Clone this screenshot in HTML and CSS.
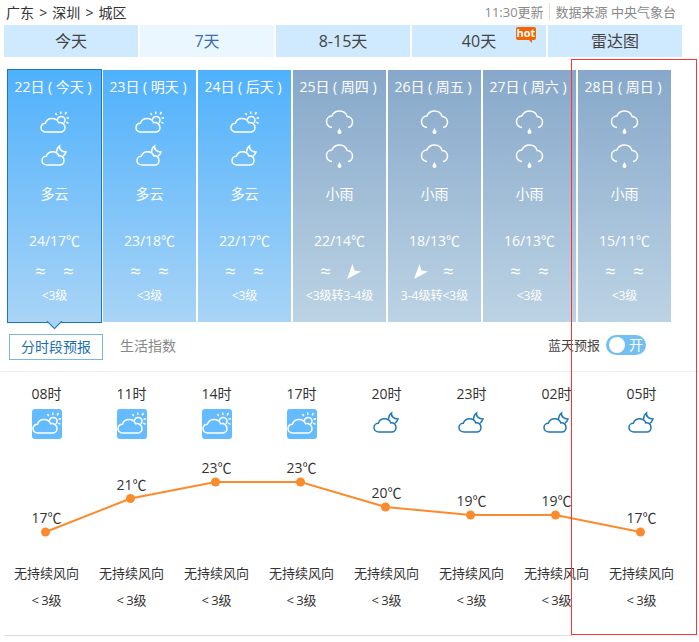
FILE: index.html
```html
<!DOCTYPE html>
<html lang="zh-CN">
<head>
    <meta charset="UTF-8">
    <title>深圳城区天气预报</title>
    <link rel="stylesheet" href="styles.css">
</head>
<body>

    <svg class="defs" width="0" height="0">
        <symbol id="i-cloud-sun" viewBox="0 0 30 24">
            <path d="M6 22C3 22 1 20 1 17.5 1 15 3 13.2 5.4 13.2 6.4 10.3 9 8.5 12 8.5c3 0 5.600 1.600 6.600 4.200C22 12 25 14.200 25 17.500 25 20 23 22 20.500 22Z"/>
            <path d="M17.300 9.800C17.700 7.800 19.300 6.400 21.200 6.400c2.100 0 3.800 1.700 3.800 3.800 0 1.100-.5 2.100-1.200 2.800"/>
            <path d="M20.500 1.500l.5 2.400M26.500 2l-1.400 2.300M29 7.700l-2.400.5M28.500 13.300l-2.200-1.200M15.500 3.200l1.300 2"/>
        </symbol>
        <symbol id="i-cloud-moon" viewBox="0 0 30 24">
            <path d="M7 21C4.300 21 2 19.200 2 16.500 2 14 4 12.300 6.300 12.300 7.300 9.500 9.800 7.800 12.500 7.800c2.900 0 5.400 1.600 6.300 4.100C21.800 11.500 24 13.500 24 16.500 24 19 22.200 21 19.800 21Z"/>
            <path d="M16.500 8.500C16.500 6 17.500 3.500 19.500 2 19 5 21.500 8 26 8 25.500 9.500 24.500 11 23 12.300"/>
        </symbol>
        <symbol id="i-rain" viewBox="0 0 30 24">
            <path d="M7 17.500C3.500 17 1.500 14.500 1.500 11.500 1.500 8.500 3.800 6.200 6.800 6 8.300 2.800 11.200 1 14.500 1c3.600 0 6.700 2.300 7.700 5.500 3 .2 5.300 2.500 5.300 5.500 0 3-2 5-4.500 5.500"/>
            <path class="fill" d="M14.500 18c-.8 1.800-2 2.800-2 4a2 2 0 0 0 4 0c0-1.200-1.200-2.200-2-4Z"/>
        </symbol>
    </svg>

    <div class="head">
        <div class="crumb">广东 &gt; 深圳 &gt; 城区</div>
        <div class="source"><span class="updated">11:30更新</span><span>数据来源 中央气象台</span></div>
    </div>

    <ul class="tabs">
        <li>今天</li>
        <li class="on">7天</li>
        <li>8-15天</li>
        <li class="has-hot">40天<span class="hot">hot</span></li>
        <li>雷达图</li>
    </ul>

    <div class="days">
        <div class="day sel">
            <div class="date">22日 ( 今天 )</div>
            <svg class="ico first"><use href="#i-cloud-sun"/></svg>
            <svg class="ico"><use href="#i-cloud-moon"/></svg>
            <div class="wea">多云</div>
            <div class="tem">24/17℃</div>
            <div class="wind"><span>≈</span><span>≈</span></div>
            <div class="lv">&lt;3级</div>
        </div>
        <div class="day">
            <div class="date">23日 ( 明天 )</div>
            <svg class="ico first"><use href="#i-cloud-sun"/></svg>
            <svg class="ico"><use href="#i-cloud-moon"/></svg>
            <div class="wea">多云</div>
            <div class="tem">23/18℃</div>
            <div class="wind"><span>≈</span><span>≈</span></div>
            <div class="lv">&lt;3级</div>
        </div>
        <div class="day">
            <div class="date">24日 ( 后天 )</div>
            <svg class="ico first"><use href="#i-cloud-sun"/></svg>
            <svg class="ico"><use href="#i-cloud-moon"/></svg>
            <div class="wea">多云</div>
            <div class="tem">22/17℃</div>
            <div class="wind"><span>≈</span><span>≈</span></div>
            <div class="lv">&lt;3级</div>
        </div>
        <div class="day rainy">
            <div class="date">25日 ( 周四 )</div>
            <svg class="ico first"><use href="#i-rain"/></svg>
            <svg class="ico"><use href="#i-rain"/></svg>
            <div class="wea">小雨</div>
            <div class="tem">22/14℃</div>
            <div class="wind"><span>≈</span><span><svg class="arrow" viewBox="0 0 14 15"><polygon points="0,15 5.500,0 7.500,6.500 14,7.500"/></svg></span></div>
            <div class="lv">&lt;3级转3-4级</div>
        </div>
        <div class="day rainy">
            <div class="date">26日 ( 周五 )</div>
            <svg class="ico first"><use href="#i-rain"/></svg>
            <svg class="ico"><use href="#i-rain"/></svg>
            <div class="wea">小雨</div>
            <div class="tem">18/13℃</div>
            <div class="wind"><span><svg class="arrow" viewBox="0 0 14 15"><polygon points="0,15 5.500,0 7.500,6.500 14,7.500"/></svg></span><span>≈</span></div>
            <div class="lv">3-4级转&lt;3级</div>
        </div>
        <div class="day rainy">
            <div class="date">27日 ( 周六 )</div>
            <svg class="ico first"><use href="#i-rain"/></svg>
            <svg class="ico"><use href="#i-rain"/></svg>
            <div class="wea">小雨</div>
            <div class="tem">16/13℃</div>
            <div class="wind"><span>≈</span><span>≈</span></div>
            <div class="lv">&lt;3级</div>
        </div>
        <div class="day rainy">
            <div class="date">28日 ( 周日 )</div>
            <svg class="ico first"><use href="#i-rain"/></svg>
            <svg class="ico"><use href="#i-rain"/></svg>
            <div class="wea">小雨</div>
            <div class="tem">15/11℃</div>
            <div class="wind"><span>≈</span><span>≈</span></div>
            <div class="lv">&lt;3级</div>
        </div>
    </div>

    <div class="subbar">
        <div class="subtab on">分时段预报</div>
        <div class="subtab">生活指数</div>
        <div class="sky">
            <span>蓝天预报</span>
            <div class="toggle"><i class="knob"></i><span>开</span></div>
        </div>
    </div>

    <div class="hours">
        <div class="hour"><p>08时</p><div class="hico day-ico"><svg><use href="#i-cloud-sun"/></svg></div></div>
        <div class="hour"><p>11时</p><div class="hico day-ico"><svg><use href="#i-cloud-sun"/></svg></div></div>
        <div class="hour"><p>14时</p><div class="hico day-ico"><svg><use href="#i-cloud-sun"/></svg></div></div>
        <div class="hour"><p>17时</p><div class="hico day-ico"><svg><use href="#i-cloud-sun"/></svg></div></div>
        <div class="hour"><p>20时</p><div class="hico"><svg><use href="#i-cloud-moon"/></svg></div></div>
        <div class="hour"><p>23时</p><div class="hico"><svg><use href="#i-cloud-moon"/></svg></div></div>
        <div class="hour"><p>02时</p><div class="hico"><svg><use href="#i-cloud-moon"/></svg></div></div>
        <div class="hour"><p>05时</p><div class="hico"><svg><use href="#i-cloud-moon"/></svg></div></div>
    </div>

    <svg class="chart" width="699" height="105">
        <polyline points="45.500,87 130.500,53.500 215.500,37 300.500,37 385.500,62 470.500,70 555.500,70 640.500,87"/>
        <circle cx="45.500" cy="87" r="4.500"/>
        <circle cx="130.500" cy="53.500" r="4.500"/>
        <circle cx="215.500" cy="37" r="4.500"/>
        <circle cx="300.500" cy="37" r="4.500"/>
        <circle cx="385.500" cy="62" r="4.500"/>
        <circle cx="470.500" cy="70" r="4.500"/>
        <circle cx="555.500" cy="70" r="4.500"/>
        <circle cx="640.500" cy="87" r="4.500"/>
        <text x="46.500" y="78">17℃</text>
        <text x="131.500" y="44.500">21℃</text>
        <text x="216.500" y="28">23℃</text>
        <text x="301.500" y="28">23℃</text>
        <text x="386.500" y="53">20℃</text>
        <text x="471.500" y="61">19℃</text>
        <text x="556.500" y="61">19℃</text>
        <text x="641.500" y="78">17℃</text>
    </svg>

    <div class="winds">
        <div><p>无持续风向</p><p class="wl">&lt; 3级</p></div>
        <div><p>无持续风向</p><p class="wl">&lt; 3级</p></div>
        <div><p>无持续风向</p><p class="wl">&lt; 3级</p></div>
        <div><p>无持续风向</p><p class="wl">&lt; 3级</p></div>
        <div><p>无持续风向</p><p class="wl">&lt; 3级</p></div>
        <div><p>无持续风向</p><p class="wl">&lt; 3级</p></div>
        <div><p>无持续风向</p><p class="wl">&lt; 3级</p></div>
        <div><p>无持续风向</p><p class="wl">&lt; 3级</p></div>
    </div>

    <div class="bottom-line"></div>

    <div class="red-frame"></div>

</body>
</html>
```

FILE: styles.css
```css
* { box-sizing: border-box; }
body { margin: 0; width: 699px; height: 642px; position: relative; overflow: hidden; background: #fff; color: #333; font-family: "Open Sans", "Noto Sans CJK SC", sans-serif; font-size: 14px; }
p { margin: 0; }
ul { margin: 0; padding: 0; list-style: none; }
.defs { position: absolute; }

.head { height: 25px; padding: 3px 23px 0 6px; display: flex; justify-content: space-between; line-height: 20px; }
.crumb { color: #333; font-size: 14px; word-spacing: 1.500px; }
.source { color: #8a8a8a; font-size: 13px; line-height: 18px; }
.updated { padding-right: 5px; margin-right: 6px; border-right: 1px solid #eadfd3; }

.tabs { display: flex; gap: 2px; padding-left: 4px; }
.tabs li { width: 134px; height: 32px; line-height: 32px; text-align: center; font-size: 16px; color: #444; background: #cfe9fe; }
.tabs li.on { background: #ebf7ff; color: #3d6cb0; }
.has-hot { position: relative; }
.hot { position: absolute; left: 104px; top: 2px; width: 20px; height: 13px; line-height: 12px; font-size: 11px; font-weight: bold; color: #fff; background: #f26500; border-radius: 2px; }
.hot::after { content: ""; position: absolute; left: 12px; top: 12px; border: 2px solid transparent; border-top-color: #f26500; border-right-color: #f26500; }

.days { display: flex; gap: 2px; margin-top: 13px; padding-left: 7px; height: 252px; }
.day { width: 93px; height: 252px; text-align: center; color: #fff; background: linear-gradient(#4fb1fc, #a9d4f6); padding-top: 7px; flex: none; }
.day.rainy { background: linear-gradient(#87a8ca, #bcd3e4); }
.day.sel { width: 95px; height: 254px; margin: -1px -1px 0 0; padding-top: 7px; border: 1px solid #1e77b0; position: relative; }
.day.sel::after { content: ""; position: absolute; left: 41px; bottom: -5px; width: 10px; height: 10px; transform: rotate(45deg); background: #a9d4f6; border: solid #1e77b0; border-width: 0 1px 1px 0; }
.date { line-height: 20px; font-size: 14px; white-space: nowrap; padding-right: 3px; }
.ico { display: block; width: 30px; height: 24px; margin: 10px auto 0; fill: none; stroke: #fff; stroke-width: 1.500; }
.ico.first { margin-top: 13px; }
.fill { fill: #fff; stroke: none; }
.wea { line-height: 20px; margin-top: 16px; }
.tem { line-height: 20px; margin-top: 27px; }
.wind { display: flex; justify-content: center; height: 20px; line-height: 20px; margin-top: 10px; font-size: 19px; }
.wind span { width: 28px; display: flex; align-items: center; justify-content: center; }
.arrow { width: 14px; height: 15px; fill: #fff; }
.lv { line-height: 20px; margin-top: 5px; font-size: 12px; white-space: nowrap; }

.subbar { display: flex; align-items: flex-start; height: 38px; margin-top: 12px; padding-left: 9px; border-bottom: 1px solid #eee; }
.subtab { height: 26px; line-height: 24px; color: #888; margin-left: 17px; }
.subtab.on { width: 94px; text-align: center; margin-left: 0; color: #1a6fb0; border: 1px solid #7fb6d6; }
.sky { margin-left: auto; margin-right: 53px; display: flex; gap: 6px; font-size: 13px; line-height: 20px; color: #444; padding-top: 1px; }
.toggle { width: 40px; height: 20px; border-radius: 10px; background: #72c0f2; color: #fff; display: flex; align-items: center; padding-left: 3px; gap: 4px; font-size: 14px; }
.knob { width: 16px; height: 16px; border-radius: 50%; background: #fff; }

.hours, .winds { display: grid; grid-template-columns: repeat(8, 85px); padding-left: 4px; text-align: center; }
.hour { padding-top: 12px; }
.hour p { line-height: 20px; }
.hico { width: 30px; height: 30px; margin: 5px auto 0; padding-top: 2px; border-radius: 3px; fill: none; stroke: #1f78b4; stroke-width: 1.500; }
.hico svg { display: block; width: 30px; height: 24px; }
.hico .fill { fill: #1f78b4; }
.day-ico { background: #64bbff; stroke: #fff; }

.chart { display: block; margin-top: 6px; }
.chart polyline { fill: none; stroke: #fb8b2c; stroke-width: 2; }
.chart circle { fill: #fb8b2c; }
.chart text { font-size: 14px; fill: #333; text-anchor: middle; }

.winds { margin-top: 13px; }
.winds p { line-height: 20px; white-space: nowrap; font-size: 13px; }
.winds .wl { margin-top: 7px; word-spacing: -1px; }
.bottom-line { width: 568px; height: 1px; margin: 25px 0 0 4px; background: #ddd; }

.red-frame { position: absolute; left: 571px; top: 59px; width: 126px; height: 576px; border: 1px solid #f33; }
```
